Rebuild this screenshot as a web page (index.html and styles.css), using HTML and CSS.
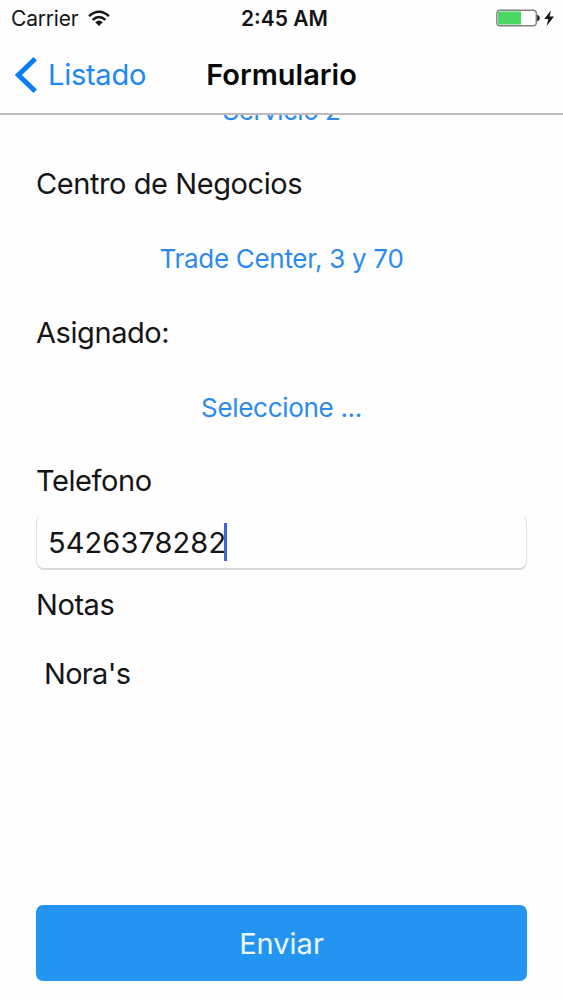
FILE: index.html
```html
<!DOCTYPE html>
<html lang="es">
<head>
<meta charset="utf-8">
<title>Formulario</title>
<link rel="stylesheet" href="styles.css">
</head>
<body>
<div class="screen">
  <header class="header">
    <div class="status">
      <div class="status-left">
        <span class="carrier">Carrier</span>
        <svg class="wifi" width="22" height="17" viewBox="0 0 22 17" fill="none" stroke="#151515" stroke-width="2.4">
          <path d="M1 6.2Q11 -2.8 21 6.2M4.6 9.9Q11 4 17.4 9.9"/>
          <path d="M7.2 12.2Q11 9 14.8 12.2L11 16Z" fill="#151515" stroke="none"/>
        </svg>
      </div>
      <span class="time">2:45 AM</span>
      <div class="status-right">
        <svg width="60" height="20" viewBox="0 0 60 20">
          <rect x="0.8" y="1.2" width="39.5" height="15.6" rx="3" fill="#fff" stroke="#858085" stroke-width="1.4"/>
          <path d="M3 2.4H25V15.6H3Q2 15.6 2 14.6V3.4Q2 2.4 3 2.4Z" fill="#4cd664"/>
          <path d="M41.2 5.5Q43.8 6.5 43.8 9T41.2 12.5Z" fill="#151515"/>
          <path d="M55 1.2L48.3 10H52.3L50.6 17L58 7.4H53.6Z" fill="#151515"/>
        </svg>
      </div>
    </div>
    <nav class="nav">
      <a class="back">
        <svg width="24" height="38" viewBox="0 0 24 38" fill="none" stroke="#0a7cf8" stroke-width="5"><path d="M21.2 2.8L4.4 19L21.2 35.2"/></svg>
        <span class="back-text">Listado</span>
      </a>
      <h1 class="title">Formulario</h1>
      <span></span>
    </nav>
  </header>
  <main class="content">
    <div class="form">
      <a class="row choice servicio">Servicio 2</a>
      <div class="row label centro">Centro de Negocios</div>
      <a class="row choice trade">Trade Center, 3 y 70</a>
      <div class="row label asignado">Asignado:</div>
      <a class="row choice select">Seleccione ...</a>
      <div class="row label telefono">Telefono</div>
      <div class="input"><span class="digits">5426378282</span><span class="caret"></span></div>
      <div class="row label notas">Notas</div>
      <div class="notes">Nora's</div>
      <div class="submit"><span class="submit-text">Enviar</span></div>
    </div>
  </main>
</div>
</body>
</html>
```
FILE: styles.css
```css
* { box-sizing: border-box; }
body {
  margin: 0;
  background: #fefefe;
  color: #151517;
  font-family: Inter, "Liberation Sans", sans-serif;
}
.screen {
  width: 563px;
  height: 1000px;
  display: flex;
  flex-direction: column;
  overflow: hidden;
}
.header {
  height: 115px;
  flex: none;
  border-bottom: 2px solid #bdbbbd;
}
.status {
  height: 37px;
  display: grid;
  grid-template-columns: 1fr auto 1fr;
  align-items: center;
  padding: 0 7px 0 11px;
}
.status-left { display: flex; align-items: center; gap: 10px; }
.carrier { font-size: 21px; letter-spacing: -0.2px; }
.time { font-size: 21px; font-weight: 600; padding-left: 2px; }
.status-right { display: flex; justify-content: flex-end; }
.nav {
  height: 75px;
  display: grid;
  grid-template-columns: 1fr auto 1fr;
  align-items: center;
  padding: 0 14px;
}
.back { display: flex; align-items: center; gap: 10px; color: #2087f5; font-size: 29px; letter-spacing: -0.25px; line-height: 36px; }
.title { margin: 0; font-size: 29px; font-weight: 600; line-height: 36px; color: #080808; }
.content { flex: 1; overflow: hidden; padding: 0 36px; }
.form { display: flex; flex-direction: column; margin-top: -43px; }
.row { height: 74.4px; display: flex; align-items: center; white-space: nowrap; }
.label { font-size: 29px; letter-spacing: -0.42px; }
.choice { justify-content: center; color: #2b8af0; font-size: 26px; letter-spacing: -0.3px; }
.servicio { padding-top: 2px; letter-spacing: -0.5px; }
.trade, .select { padding-top: 1px; }
.telefono { height: 71px; padding-top: 3px; }
.input {
  height: 55px;
  display: flex;
  align-items: center;
  padding: 1px 0 0 11px;
  border: 1px solid #e2e2e2;
  border-top-color: transparent;
  border-bottom: 2px solid #d8d8d8;
  border-radius: 8px;
  font-size: 29px;
}
.digits { letter-spacing: 0.1px; }
.caret { width: 3px; height: 38px; background: #3e64dc; margin-left: -2px; }
.notas { height: 70px; }
.notes { height: 265px; padding: 16px 8px; font-size: 29px; line-height: 36px; letter-spacing: -0.7px; }
.submit {
  height: 76px;
  display: flex;
  align-items: center;
  justify-content: center;
  padding-top: 2px;
  background: #2395f1;
  border-radius: 7px;
  color: #e9f8ff;
  font-size: 29px;
}
```
